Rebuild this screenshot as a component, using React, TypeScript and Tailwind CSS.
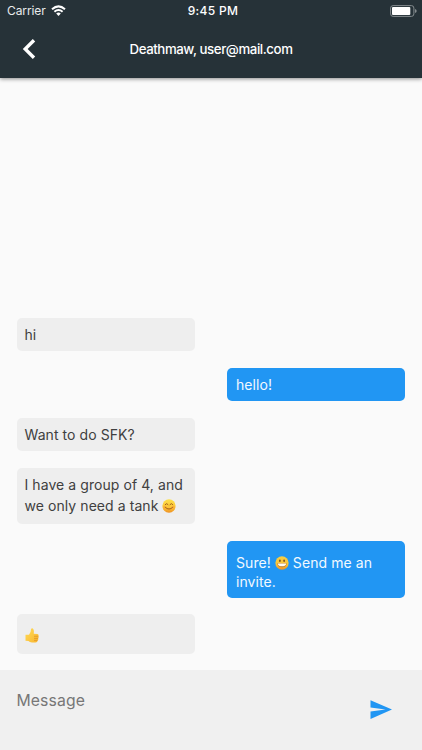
import type { ReactNode } from 'react';

function Smile({ grin = false }: { grin?: boolean }) {
  const id = grin ? 'face-grin' : 'face-smile';
  return (
    <svg viewBox="0 0 28 28" className="inline-block h-[14px] w-[14px] align-[-2px]">
      <defs>
        <linearGradient id={id} x1="0" y1="0" x2="0" y2="1">
          <stop offset="0" stopColor={grin ? '#f5cf45' : '#fde14a'} />
          <stop offset="0.6" stopColor="#fbc437" />
          <stop offset="1" stopColor="#ee9225" />
        </linearGradient>
      </defs>
      <circle cx="14" cy="14" r="13.3" fill={`url(#${id})`} />
      {grin ? (
        <>
          <ellipse cx="9.8" cy="9.5" rx="1.600" ry="2.500" fill="#71401a" />
          <ellipse cx="18.2" cy="9.5" rx="1.600" ry="2.500" fill="#71401a" />
          <path d="M4.500 14.500H23.500C23 20 19 22.500 14 22.500S5 20 4.500 14.500z" fill="#b87a2a" />
          <path d="M5.500 15H22.500C22 19.500 18 20.500 14 20.500S6 19.500 5.500 15z" fill="#fffaf0" />
        </>
      ) : (
        <>
          <circle cx="5.500" cy="16" r="3" fill="#f47b3a" opacity=".3" />
          <circle cx="22.500" cy="16" r="3" fill="#f47b3a" opacity=".3" />
          <path d="M6.500 11q3-4 5.500 0M16 11q3-4 5.500 0M7 17q7 6.500 14 0" fill="none" stroke="#925015" strokeWidth="1.700" strokeLinecap="round" />
        </>
      )}
    </svg>
  );
}

function ThumbsUp() {
  return (
    <svg viewBox="0 0 28 30" className="h-[15px] w-[14px]">
      <defs>
        <linearGradient id="thumb" x1="0" y1="0" x2="1" y2="1">
          <stop offset="0" stopColor="#ffdc58" />
          <stop offset="1" stopColor="#f9b52f" />
        </linearGradient>
      </defs>
      <path d="M1 13.500H8Q12 9 12 2.500Q13 0 15.500 1Q18.500 3 17.500 11.500L25 12Q28 13 27 16.500Q28 18.500 26.500 20.500Q27.500 23 25.300 24.800Q25 28.500 21 29H14Q9 28.500 7 26L1 25.500z" fill="url(#thumb)" />
      <path d="M18 16.500h8.500M18 20.700h8M18 24.700h7" stroke="#d98a20" strokeWidth="1.300" fill="none" />
    </svg>
  );
}

function Bubble({ mine = false, className, children }: { mine?: boolean; className: string; children: ReactNode }) {
  return (
    <div
      className={`w-[178px] rounded-[5px] text-[14px] tracking-[0.07px] whitespace-nowrap ${
        mine ? 'ml-[210.5px] bg-[#2196f3] pl-[9px] text-[#f1f9ff]' : 'bg-[#eeeeee] pl-2 text-[#404040]'
      } ${className}`}
    >
      {children}
    </div>
  );
}

export default function App() {
  return (
    <div className="flex h-[750px] w-[422px] flex-col overflow-hidden bg-[#fafafa] font-['Inter','Liberation_Sans',sans-serif]">
      <header className="z-10 h-[77.5px] shrink-0 bg-[#263238] text-white shadow-[0_1px_4px_rgba(0,0,0,0.45)]">
        <div className="grid h-[22px] grid-cols-[1fr_60px_1fr] items-center pr-[5px] pl-[7px] text-[12px] leading-[22px]">
          <div className="flex items-center gap-[5px]">
            <span className="tracking-[-0.1px] text-[#e9ebec]">Carrier</span>
            <svg viewBox="0 0 15 11" className="-mt-px h-[11px] w-[15px]" fill="none" stroke="#fff" strokeWidth="2">
              <path d="M1 4.200Q7.500-1.500 14 4.200M3.400 6.800Q7.500 3.300 11.600 6.800" />
              <path d="M5.200 8.500Q7.500 6.700 9.800 8.500L7.500 10.900z" fill="#fff" stroke="none" />
            </svg>
          </div>
          <span className="pl-[2px] text-center font-medium tracking-[0.3px] whitespace-nowrap">9:45 PM</span>
          <svg viewBox="0 0 27 12" className="-mt-px h-[12px] w-[27px] justify-self-end">
            <rect x="0.600" y="0.600" width="23.300" height="10.800" rx="2.500" fill="none" stroke="#858c8f" />
            <rect x="2" y="2" width="18.300" height="8" rx="1" fill="#fff" />
            <path d="M25 4q1.700.4 1.700 2T25 8z" fill="#858c8f" />
          </svg>
        </div>
        <div className="grid h-[54px] grid-cols-[60px_1fr_60px] items-center">
          <svg viewBox="0 0 14 22" className="ml-[22px] h-[22px] w-[14px]" fill="none" stroke="#fff" strokeWidth="3.400">
            <path d="M12 2.200L3.200 11L12 19.800" />
          </svg>
          <h1 className="pt-[2px] text-center text-[13.250px] font-medium tracking-[-0.42px]">Deathmaw, user@mail.com</h1>
        </div>
      </header>

      <main className="flex flex-1 flex-col justify-end gap-[16.5px] pr-4 pb-[16px] pl-[16.5px]">
        <Bubble className="h-[33.500px] leading-[33px]">hi</Bubble>
        <Bubble mine className="h-[33.500px] leading-[33px]">hello!</Bubble>
        <Bubble className="h-[33.500px] leading-[33px]">Want to do SFK?</Bubble>
        <Bubble className="h-[56.500px] pt-[6px] leading-[21.500px]">
          <p>I have a group of 4, and</p>
          <p>we only need a tank <Smile /></p>
        </Bubble>
        <Bubble mine className="h-[57px] pt-[12px] leading-[19.500px]">
          <p>Sure! <Smile grin /> Send me an</p>
          <p>invite.</p>
        </Bubble>
        <Bubble className="h-[40px] pt-[14px]"><ThumbsUp /></Bubble>
      </main>

      <footer className="flex h-[80px] shrink-0 items-center justify-between bg-[#f0f0f0] pr-[30px] pl-[16.500px]">
        <span className="mb-[18px] text-[15.750px] tracking-[0.1px] text-[#777]">Message</span>
        <svg viewBox="0 0 22 19" className="mb-px h-[19px] w-[22px]" fill="#2196f3">
          <path d="M.5 19L22 9.500L.5.300V7.400L15.500 9.500L.5 11.600z" />
        </svg>
      </footer>
    </div>
  );
}
